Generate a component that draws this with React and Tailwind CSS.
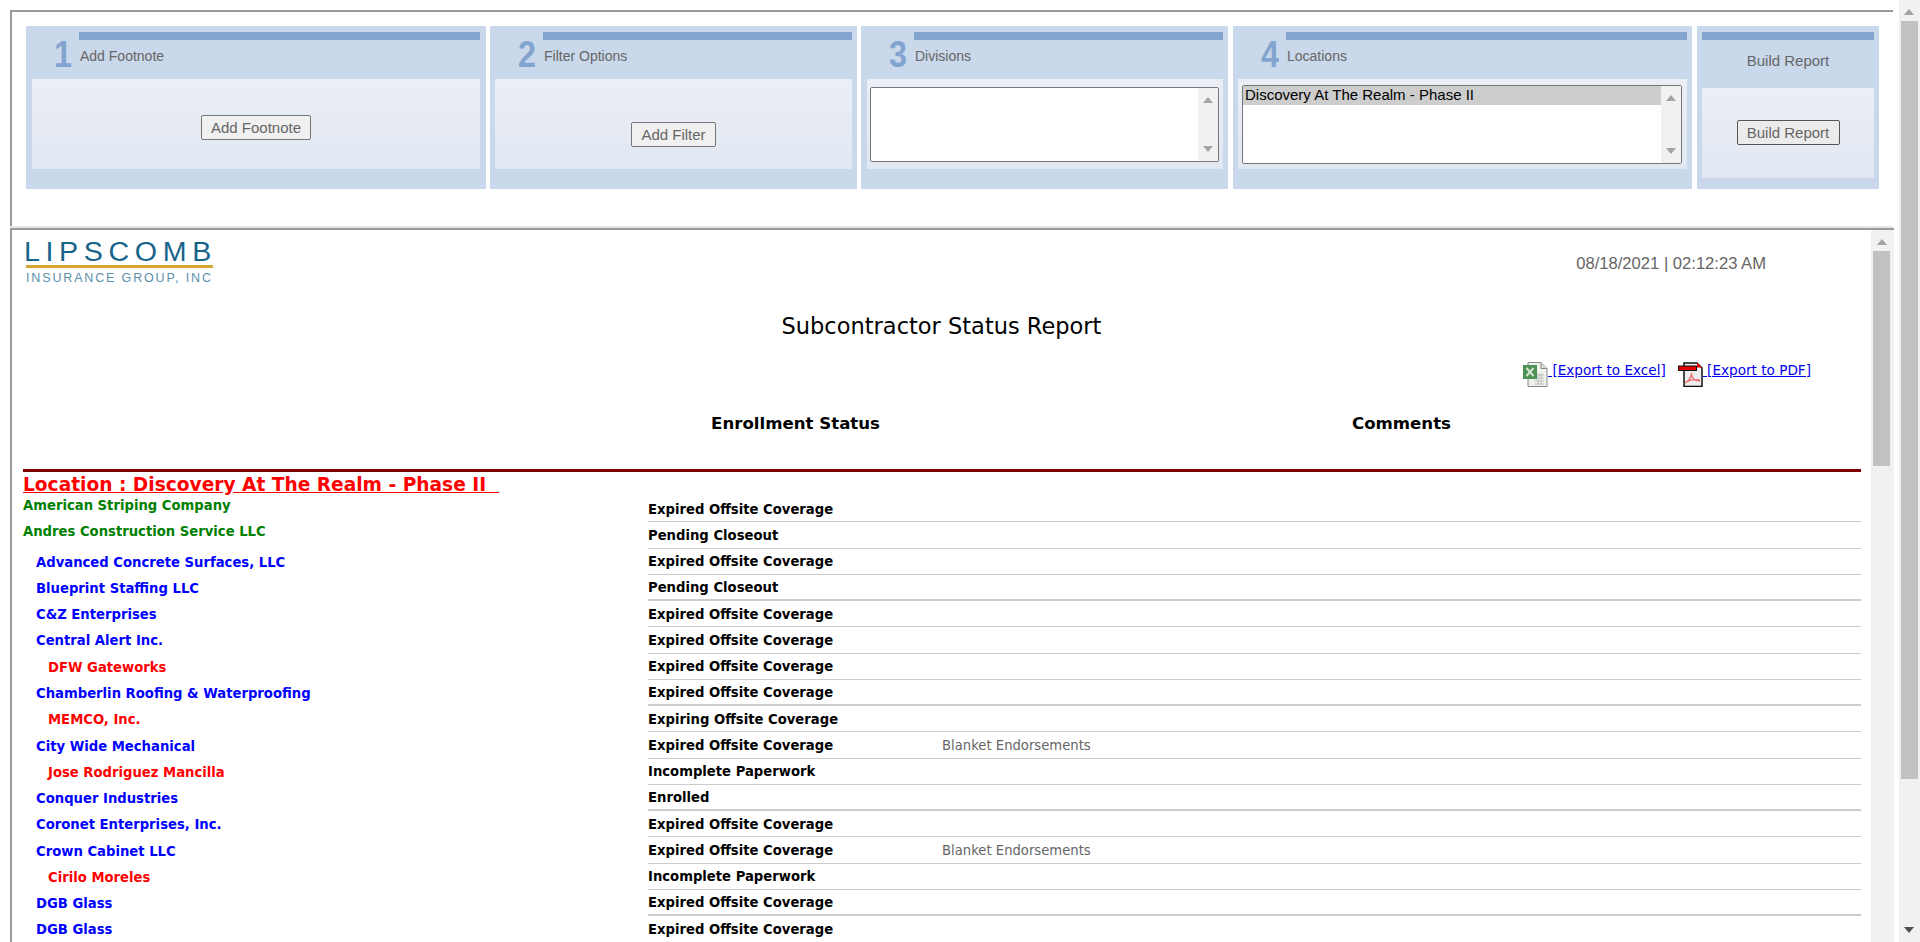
import React from "react";

const rows = [
  { name: "American Striping Company", level: 0, status: "Expired Offsite Coverage" },
  { name: "Andres Construction Service LLC", level: 0, status: "Pending Closeout" },
  { name: "Advanced Concrete Surfaces, LLC", level: 1, status: "Expired Offsite Coverage" },
  { name: "Blueprint Staffing LLC", level: 1, status: "Pending Closeout", thick: true },
  { name: "C&Z Enterprises", level: 1, status: "Expired Offsite Coverage" },
  { name: "Central Alert Inc.", level: 1, status: "Expired Offsite Coverage" },
  { name: "DFW Gateworks", level: 2, status: "Expired Offsite Coverage" },
  { name: "Chamberlin Roofing & Waterproofing", level: 1, status: "Expired Offsite Coverage", thick: true },
  { name: "MEMCO, Inc.", level: 2, status: "Expiring Offsite Coverage" },
  { name: "City Wide Mechanical", level: 1, status: "Expired Offsite Coverage", comment: "Blanket Endorsements" },
  { name: "Jose Rodriguez Mancilla", level: 2, status: "Incomplete Paperwork" },
  { name: "Conquer Industries", level: 1, status: "Enrolled", thick: true },
  { name: "Coronet Enterprises, Inc.", level: 1, status: "Expired Offsite Coverage" },
  { name: "Crown Cabinet LLC", level: 1, status: "Expired Offsite Coverage", comment: "Blanket Endorsements" },
  { name: "Cirilo Moreles", level: 2, status: "Incomplete Paperwork" },
  { name: "DGB Glass", level: 1, status: "Expired Offsite Coverage", thick: true },
  { name: "DGB Glass", level: 1, status: "Expired Offsite Coverage" },
];

const nameStyles = [
  "pl-0 text-[#008000] -translate-y-[4px]",
  "pl-[13px] text-[#0000ff]",
  "pl-[25px] text-[#ff0000]",
];

const Arrow = ({ down, color = "#a3a3a3" }) => (
  <svg width="10" height="6" viewBox="0 0 10 6" className="block">
    <path d={down ? "M0 0h10L5 6z" : "M5 0l5 6H0z"} fill={color} />
  </svg>
);

const Panel = ({ num, label, width, padRight, contentLeft, children }) => (
  <div className={`${width} ${padRight} h-[163px] bg-[#c9d8eb] pt-[6px] shrink-0`}>
    <div className="flex h-[47px]">
      <div className="w-[46px] shrink-0 text-right font-['Liberation_Sans',sans-serif] font-bold text-[36px] leading-[41px] text-[#84a4d0] pt-[2px] scale-x-90 origin-right">
        {num}
      </div>
      <div className="flex-1 pl-[7px]">
        <div className="h-[8px] bg-[#84a4d0]" />
        <div className="pt-[7px] pl-[1px] font-['Liberation_Sans',sans-serif] text-[14px] leading-[18px] text-[#666666]">{label}</div>
      </div>
    </div>
    <div className={`${contentLeft} h-[90px] bg-gradient-to-b from-[#ebeef5] to-[#e1e8f2]`}>{children}</div>
  </div>
);

const FakeButton = ({ children, className }) => (
  <button
    type="button"
    className={`${className} h-[25px] border rounded-[2px] font-['Liberation_Sans',sans-serif] text-[15px] leading-[21px] text-[#666666]`}
  >
    {children}
  </button>
);

const ListBox = ({ className, children }) => (
  <div className={`${className} flex border border-[#767676] rounded-[2px] bg-white overflow-hidden`}>
    <div className="flex-1">{children}</div>
    <div className="w-[20px] bg-[#f1f1f1] flex flex-col items-center justify-between py-[9px]">
      <Arrow />
      <Arrow down />
    </div>
  </div>
);

const ExcelIcon = () => (
  <svg width="25" height="25" viewBox="0 0 25 25" className="shrink-0">
    <path d="M5 0.5h13l6 6v18H5z" fill="#f0f0ec" stroke="#8a8a88" />
    <path d="M18 .5v6h6" fill="#d8d8d4" stroke="#8a8a88" />
    <path d="M12 13h9M12 16h9M12 19h9M12 22h9M15 11v12M18 11v12" stroke="#c0c0bc" strokeWidth="1" fill="none" />
    <rect x="0" y="3" width="14" height="14" fill="#4f9155" />
    <path d="M3.5 6l7 8M10.5 6l-7 8" stroke="#d5e8d4" strokeWidth="2" fill="none" />
  </svg>
);

const PdfIcon = () => (
  <svg width="25" height="25" viewBox="0 0 25 25" className="shrink-0">
    <path d="M6 1h13l5 5v18.5H6z" fill="#eeeeee" stroke="#111111" strokeWidth="1.5" />
    <path d="M19 .5l5 5h-5z" fill="#e00000" />
    <rect x="0.5" y="4" width="18" height="4.5" fill="#e00000" stroke="#111111" strokeWidth="1" />
    <path d="M14 11c-1 4-3 8-7 10M13 12c1 4 4 7 9 7M8 20c4-2 9-3 14-2" stroke="#f07070" strokeWidth="1.3" fill="none" />
  </svg>
);

const Logo = () => (
  <div className="ml-[3px] w-[187px] font-['Liberation_Sans',sans-serif]">
    <div className="-ml-[2px] text-[27px] leading-[24px] tracking-[5.3px] text-[#17648a] whitespace-nowrap scale-x-[1.06] origin-left">LIPSCOMB</div>
    <div className="h-[3px] bg-[#d6a832] mt-[1px]" />
    <div className="text-[12.5px] leading-[14px] mt-[3px] tracking-[1.85px] text-[#5b90aa] whitespace-nowrap">INSURANCE GROUP, INC</div>
  </div>
);

const ExportLink = ({ children }) => (
  <a href="#" className="underline text-[#0000ee] whitespace-pre">{children}</a>
);

export default function App() {
  return (
    <div className="relative flex h-[942px] overflow-hidden bg-white font-['DejaVu_Sans',sans-serif]">
      <div className="w-[1894px] shrink-0 pl-[10px] pt-[10px] flex flex-col">
        {/* filter frame */}
        <div className="h-[216px] w-[1883px] border-t-2 border-l-2 border-[#999999] pl-[14px] pt-[14px]">
          <div className="flex gap-[4px]">
            <Panel num="1" label="Add Footnote" width="w-[460px]" padRight="pr-[6px]" contentLeft="ml-[6px]">
              <div className="h-full flex justify-center pt-[36px]">
                <FakeButton className="w-[110px] border-[#767676] bg-[#f0f0f0]">Add Footnote</FakeButton>
              </div>
            </Panel>
            <Panel num="2" label="Filter Options" width="w-[367px]" padRight="pr-[5px]" contentLeft="ml-[5px]">
              <div className="h-full flex justify-center pt-[43px]">
                <FakeButton className="w-[85px] border-[#767676] bg-[#f0f0f0]">Add Filter</FakeButton>
              </div>
            </Panel>
            <Panel num="3" label="Divisions" width="w-[367px]" padRight="pr-[5px]" contentLeft="ml-[6px]">
              <div className="h-full pl-[3px] pt-[8px]">
                <ListBox className="w-[349px] h-[75px]" />
              </div>
            </Panel>
            <Panel num="4" label="Locations" width="w-[459px] ml-[1px]" padRight="pr-[5px]" contentLeft="ml-[5px]">
              <div className="h-full pl-[4px] pt-[6px]">
                <ListBox className="w-[440px] h-[79px]">
                  <div className="h-[19px] bg-[#cdcdcd] pl-[2px] font-['Liberation_Sans',sans-serif] text-[15px] leading-[18px] text-black whitespace-nowrap">
                    Discovery At The Realm - Phase II
                  </div>
                </ListBox>
              </div>
            </Panel>
            <div className="ml-[1px] w-[182px] h-[163px] shrink-0 bg-[#c9d8eb] pt-[6px] pl-[5px] pr-[5px]">
              <div className="h-[8px] bg-[#84a4d0]" />
              <div className="h-[48px] pt-[12px] text-center font-['Liberation_Sans',sans-serif] text-[15px] leading-[18px] text-[#666666]">Build Report</div>
              <div className="h-[90px] bg-gradient-to-b from-[#ebeef5] to-[#e1e8f2] flex justify-center pt-[32px]">
                <FakeButton className="w-[103px] border-[#555555] bg-[#ebebeb]">Build Report</FakeButton>
              </div>
            </div>
          </div>
        </div>
        <div className="h-[2px] w-[1883px] bg-[#e6e6e6]" />

        {/* report frame */}
        <div className="flex-1 min-h-0 flex w-[1884px] border-t-2 border-l-2 border-[#999999]">
          <div className="w-[1859px] shrink-0 pl-[11px] pr-[10px] pt-[10px]">
            <div className="flex justify-between h-[44px]">
              <Logo />
              <div className="pr-[95px] pt-[14px] font-['Liberation_Sans',sans-serif] text-[16.6px] leading-[20px] text-[#666666]">
                08/18/2021 | 02:12:23 AM
              </div>
            </div>
            <div className="pt-[28px] pl-[1px] pr-[2px] text-center text-[22.5px] leading-[28px] text-black">Subcontractor Status Report</div>
            <div className="flex justify-end items-start gap-[12px] h-[25px] mt-[22px] pr-[50px] text-[13.6px] leading-[16px]">
              <div className="flex items-start">
                <ExcelIcon />
                <ExportLink> [Export to Excel]</ExportLink>
              </div>
              <div className="flex items-start">
                <PdfIcon />
                <ExportLink> [Export to PDF]</ExportLink>
              </div>
            </div>
            <div className="flex h-[22px] mt-[26px] text-[16.6px] font-bold leading-[22px] text-black">
              <div className="w-[857px] shrink-0 text-right">Enrollment Status</div>
              <div className="w-[571px] shrink-0 text-right">Comments</div>
            </div>
            <div className="mt-[34px] h-[3px] bg-[#800000]" />
            <div className="h-[22px] mt-[2px] text-[18.6px] font-bold leading-[22px] text-[#ff0000] underline whitespace-pre">
              {"Location : Discovery At The Realm - Phase II  "}
            </div>
            {rows.map((row, i) => (
              <div key={i} className="flex h-[26.27px] text-[13.2px] font-bold leading-[16px]">
                <div className="w-[625px] shrink-0 flex items-center pt-[2px]">
                  <div className={nameStyles[row.level]}>{row.name}</div>
                </div>
                <div className={`flex-1 flex items-center min-w-0 pt-[2px] border-[#cccccc] ${row.thick ? "border-b-2" : "border-b"}`}>
                  <div className="w-[294px] shrink-0 text-black">{row.status}</div>
                  <div className="font-normal text-[#666666]">{row.comment}</div>
                </div>
              </div>
            ))}
          </div>
          {/* report scrollbar */}
          <div className="relative w-[23px] shrink-0 bg-[#f1f1f1] pl-[2px]">
            <div className="absolute left-[6px] top-[9px]"><Arrow /></div>
            <div className="w-[17px] h-[215px] mt-[21px] bg-[#c1c1c1]" />
          </div>
        </div>
      </div>

      {/* page scrollbar */}
      <div className="relative ml-[5px] w-[21px] shrink-0 bg-[#f1f1f1] pl-[2px] pt-[21px]">
        <div className="absolute left-[5px] top-[9px]"><Arrow /></div>
        <div className="w-[17px] h-[758px] bg-[#c1c1c1]" />
        <div className="absolute left-[5px] bottom-[9px]"><Arrow down color="#505050" /></div>
      </div>
    </div>
  );
}
